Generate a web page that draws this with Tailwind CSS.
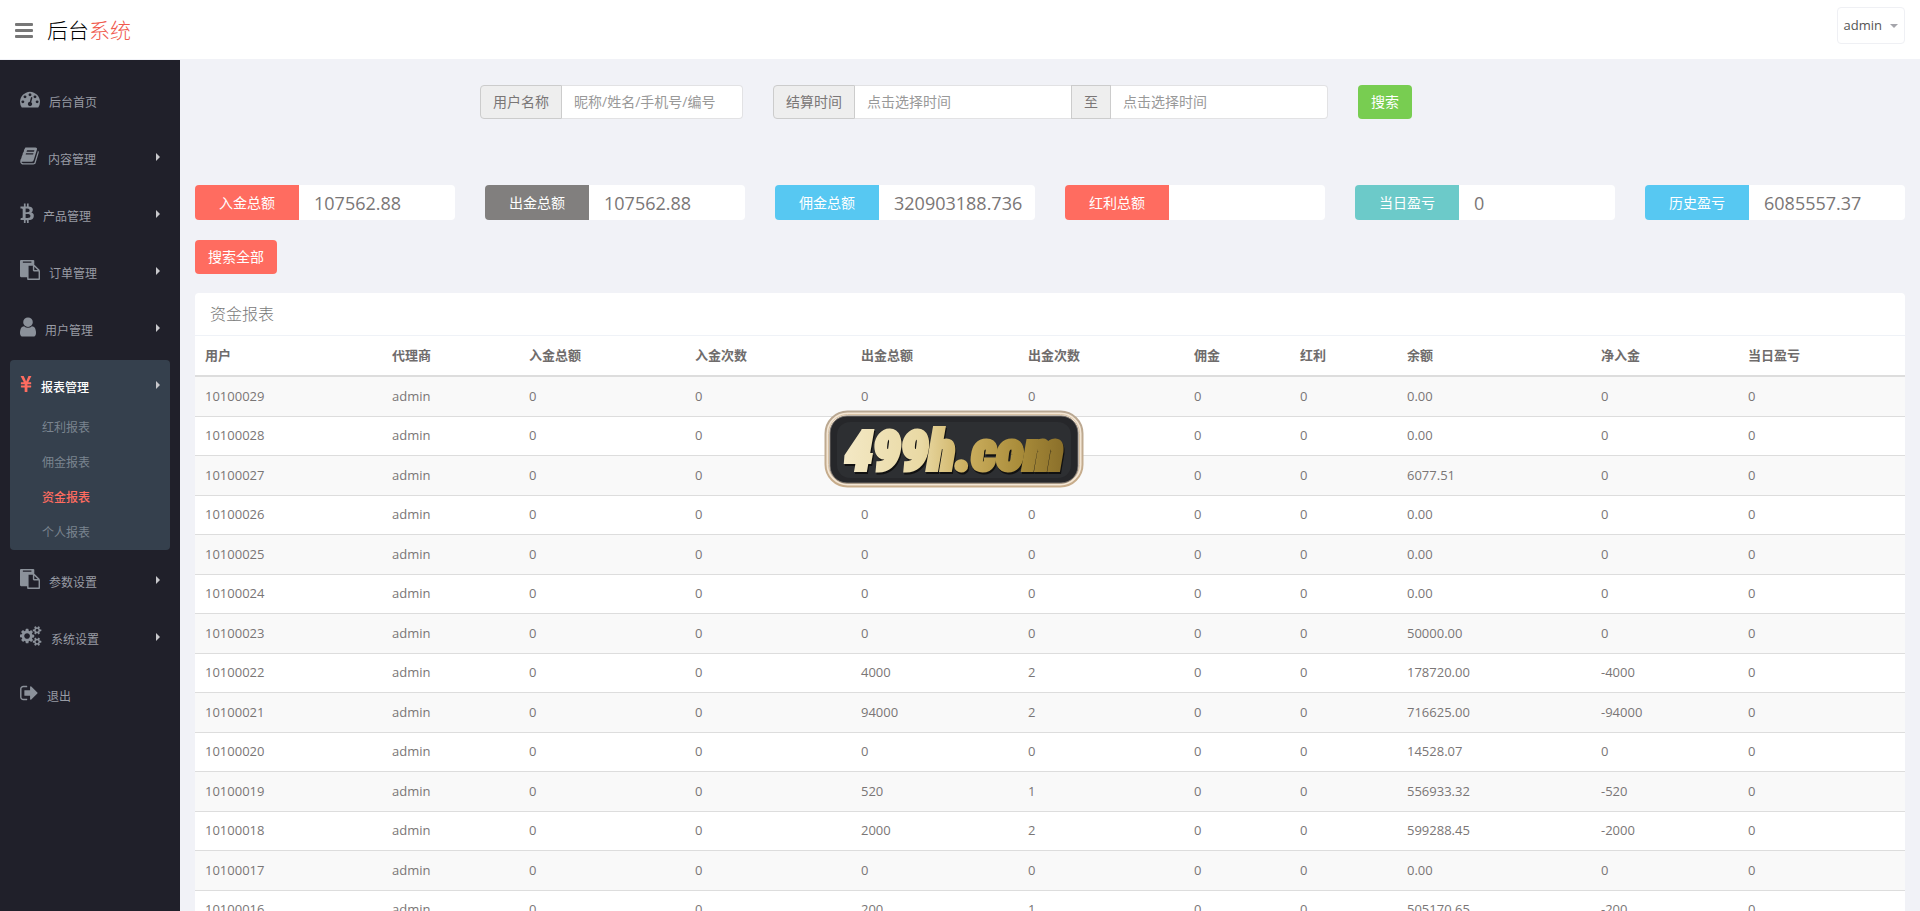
<!DOCTYPE html>
<html lang="zh-CN">
<head>
<meta charset="utf-8">
<title>后台系统</title>
<script src="https://cdn.jsdelivr.net/npm/@tailwindcss/browser@4"></script>
</head>
<body class="flex h-screen flex-col overflow-hidden bg-[#f1f2f7] font-['Open_Sans','Noto_Sans_CJK_SC',sans-serif] text-sm text-[#7a7676]">

<header class="flex h-[60px] shrink-0 items-start justify-between border-b border-[#f1f2f7] bg-white pr-[15px] pl-[15px]">
  <div class="flex h-[60px] items-center gap-[14px]">
    <button type="button" aria-label="切换菜单">
      <svg class="h-4 w-[18px] fill-[#777]" viewBox="0 0 18 16"><rect y="1" width="18" height="3" rx="1"/><rect y="7" width="18" height="3" rx="1"/><rect y="13" width="18" height="3" rx="1"/></svg>
    </button>
    <a href="#" class="text-[21px] leading-[30px] font-light text-black">后台<span class="text-[#f0594d]">系统</span></a>
  </div>
  <button type="button" class="mt-[7px] flex h-[37px] items-center gap-2 rounded border border-[#eff0f4] px-[6px] text-[13px] text-[#555]">admin
    <svg class="h-1 w-2 fill-[#a5a5ab]" viewBox="0 0 8 4"><path d="M0 0h8l-4 4z"/></svg>
  </button>
</header>

<div class="flex min-h-0 flex-1">
  <nav class="w-[180px] shrink-0 bg-[#20202a] px-[10px] pt-[15px] text-xs text-[#989ba4]">
    <ul class="flex flex-col gap-[5px]" id="menu"></ul>
  </nav>

  <main class="min-w-0 flex-1 px-[15px] pt-[25px]">
    <form class="flex gap-[30px] pl-[285px]">
      <div class="flex h-[34px] w-[263px]">
        <label for="user" class="flex w-[82px] shrink-0 items-center justify-center rounded-l border border-[#ccc] bg-[#eee]">用户名称</label>
        <input id="user" type="text" placeholder="昵称/姓名/手机号/编号" class="min-w-0 flex-1 rounded-r border border-l-0 border-[#e2e2e4] bg-white px-3 placeholder:text-[#999]">
      </div>
      <div class="flex h-[34px] w-[555px]">
        <label for="from" class="flex w-[82px] shrink-0 items-center justify-center rounded-l border border-[#ccc] bg-[#eee]">结算时间</label>
        <input id="from" type="text" placeholder="点击选择时间" class="min-w-0 flex-1 border-y border-[#e2e2e4] bg-white px-3 placeholder:text-[#999]">
        <label for="to" class="flex w-10 shrink-0 items-center justify-center border border-[#ccc] bg-[#eee]">至</label>
        <input id="to" type="text" placeholder="点击选择时间" class="min-w-0 flex-1 rounded-r border border-l-0 border-[#e2e2e4] bg-white px-3 placeholder:text-[#999]">
      </div>
      <button type="button" class="h-[34px] w-[54px] rounded bg-[#78cd51] text-white">搜索</button>
    </form>

    <div class="mt-[66px] grid grid-cols-6 gap-[30px]">
      <div class="flex h-[35px]"><label for="s1" class="flex w-2/5 items-center justify-center rounded-l bg-[#ff6c60] text-white">入金总额</label><input id="s1" value="107562.88" readonly class="w-3/5 rounded-r bg-white pl-[15px] text-lg"></div>
      <div class="flex h-[35px]"><label for="s2" class="flex w-2/5 items-center justify-center rounded-l bg-[#817f7e] text-white">出金总额</label><input id="s2" value="107562.88" readonly class="w-3/5 rounded-r bg-white pl-[15px] text-lg"></div>
      <div class="flex h-[35px]"><label for="s3" class="flex w-2/5 items-center justify-center rounded-l bg-[#57c8f2] text-white">佣金总额</label><input id="s3" value="320903188.736" readonly class="w-3/5 rounded-r bg-white pl-[15px] text-lg"></div>
      <div class="flex h-[35px]"><label for="s4" class="flex w-2/5 items-center justify-center rounded-l bg-[#ff6c60] text-white">红利总额</label><input id="s4" value="" readonly class="w-3/5 rounded-r bg-white pl-[15px] text-lg"></div>
      <div class="flex h-[35px]"><label for="s5" class="flex w-2/5 items-center justify-center rounded-l bg-[#6ccac9] text-white">当日盈亏</label><input id="s5" value="0" readonly class="w-3/5 rounded-r bg-white pl-[15px] text-lg"></div>
      <div class="flex h-[35px]"><label for="s6" class="flex w-2/5 items-center justify-center rounded-l bg-[#57c8f2] text-white">历史盈亏</label><input id="s6" value="6085557.37" readonly class="w-3/5 rounded-r bg-white pl-[15px] text-lg"></div>
    </div>

    <button type="button" class="mt-5 block h-[34px] w-[82px] rounded bg-[#ff6c60] text-white">搜索全部</button>

    <section class="mt-[19px] rounded-t bg-white">
      <h2 class="flex h-[43px] items-center border-b border-[#eff2f7] pl-[15px] text-base font-light text-[#797979]">资金报表</h2>
      <table class="w-full table-fixed text-left text-[13px]">
        <colgroup><col class="w-[187px]"><col class="w-[137px]"><col class="w-[166px]"><col class="w-[166px]"><col class="w-[167px]"><col class="w-[166px]"><col class="w-[106px]"><col class="w-[107px]"><col class="w-[194px]"><col class="w-[147px]"><col class="w-[167px]"></colgroup>
        <thead><tr class="h-10 border-b-2 border-[#ddd]" id="head"></tr></thead>
        <tbody id="rows"></tbody>
      </table>
    </section>
  </main>
</div>

<svg class="fixed top-[409px] left-[824px] h-20 w-[260px]" viewBox="0 0 260 80" role="img" aria-label="499h.com">
  <defs>
    <linearGradient id="gold" x1="0" x2="1" y1="0" y2="0"><stop offset="0" stop-color="#f3e8c4"/><stop offset=".35" stop-color="#e9d9a4"/><stop offset=".55" stop-color="#cdb060"/><stop offset=".8" stop-color="#a98c3a"/><stop offset="1" stop-color="#8a6f2a"/></linearGradient>
    <linearGradient id="rim" x1="0" x2="0" y1="0" y2="1"><stop offset="0" stop-color="#b9a893"/><stop offset="1" stop-color="#c8ad8b"/></linearGradient>
  </defs>
  <rect x="1.500" y="2.500" width="257" height="75" rx="22" fill="#f3e6d5" stroke="url(#rim)" stroke-width="2"/>
  <rect x="4.500" y="5.500" width="251" height="69" rx="19" fill="#fdf5ea" stroke="#d9c3a5"/>
  <rect x="6" y="7" width="248" height="67" rx="17" fill="#26272a" stroke="#77706a"/>
  <rect x="13" y="13" width="234" height="56" rx="13" fill="#2d2f32"/>
  <text class="drop-shadow-[1px_2px_0_#111]" x="21" y="61" font-family="'Liberation Sans Narrow','Roboto Condensed','DejaVu Sans Condensed',sans-serif" font-size="56" font-weight="900" font-style="italic" stroke-width="4" stroke-linejoin="miter" fill="url(#gold)" stroke="url(#gold)">499h.com</text>
</svg>

<script>
const icons = {
  dash: '<svg class="h-5 w-5 fill-current" viewBox="0 0 1792 1792"><path d="M384 1152q0-53-37.5-90.5t-90.5-37.5-90.5 37.5-37.5 90.5 37.5 90.5 90.5 37.5 90.5-37.5 37.5-90.5zm192-448q0-53-37.5-90.5t-90.5-37.5-90.5 37.5-37.5 90.5 37.5 90.5 90.5 37.5 90.5-37.5 37.5-90.5zm428 481l101-382q6-26-7.5-48.5t-38.5-29.5-48 6.5-30 39.5l-101 382q-60 5-107 43.5t-63 98.5q-20 77 20 146t117 89 146-20 89-117q16-60-6-117t-72-91zm660-33q0-53-37.5-90.5t-90.5-37.5-90.5 37.5-37.5 90.5 37.5 90.5 90.5 37.5 90.5-37.5 37.5-90.5zm-640-640q0-53-37.5-90.5t-90.5-37.5-90.5 37.5-37.5 90.5 37.5 90.5 90.5 37.5 90.5-37.5 37.5-90.5zm448 192q0-53-37.5-90.5t-90.5-37.5-90.5 37.5-37.5 90.5 37.5 90.5 90.5 37.5 90.5-37.5 37.5-90.5zm320 448q0 261-141 483-19 29-54 29h-1402q-35 0-54-29-141-221-141-483 0-182 71-348t191-286 286-191 348-71 348 71 286 191 191 286 71 348z"/></svg>',
  book: '<svg class="h-5 w-[19px] fill-current" viewBox="60 0 1672 1792"><path d="M1703 478q40 57 18 129l-275 906q-19 64-76.500 107.500t-122.500 43.500h-923q-77 0-148.500-53.500t-99.500-131.500q-24-67-2-127 0-4 3-27t4-37q1-8-3-21.500t-3-19.500q2-11 8-21t16.500-23.500 16.500-23.500q23-38 45-91.500t30-91.500q3-10 .5-30t-.5-28q3-11 17-28t17-23q21-36 42-92t25-90q1-9-2.500-32t.5-28q4-13 22-30.500t22-22.500q19-26 42.500-84.500t27.500-96.500q1-8-3-25.500t-2-26.500q2-8 9-18t18-23 17-21q8-12 16.500-30.500t15-35 16-36 19.500-32 26.500-23.500 36-11.500 47.500 5.500l-1 3q38-9 51-9h761q74 0 114 56t18 130l-274 906q-36 119-71.500 153.500t-128.500 34.500h-869q-27 0-38 15-11 16-1 43 24 70 144 70h923q29 0 56-15.500t35-41.500l300-987q7-22 5-57 38 15 59 43zm-1064 2q-4 13 2 22.500t20 9.500h608q13 0 25.500-9.500t16.500-22.500l21-64q4-13-2-22.500t-20-9.500h-608q-13 0-25.500 9.500t-16.500 22.500zm-83 256q-4 13 2 22.500t20 9.500h608q13 0 25.500-9.500t16.500-22.500l21-64q4-13-2-22.500t-20-9.500h-608q-13 0-25.500 9.500t-16.500 22.500z"/></svg>',
  btc: '<svg class="h-5 w-[14px] fill-current" preserveAspectRatio="none" viewBox="256 60 1260 1700"><path d="M1408 618q18 182-131 258 117 28 175 103t45 214q-7 71-32.500 125t-64.500 89-97 58.500-121.500 34.500-145.500 15v255h-154v-251q-80 0-122-1v252h-154v-255q-18 0-54-.5t-55-.5h-200l31-183h111q50 0 58-51v-402h16q-6-1-16-1v-287q-13-68-89-68h-111v-164l212 1q64 0 97-1v-252h154v247q82-2 122-2v-245h154v252q79 7 140 22.500t113 45 82.500 78 36.500 114.500zm-215 545q0-36-15-64t-37-46-57.500-30.500-65.500-18.500-74-9-69-3-64.500 1-47.500 1v338q8 0 37 .5t48 .5 53-1.500 58.500-4 57-8.500 55.500-14 47.500-21 39.500-30 24.500-40 9.500-51zm-71-476q0-33-12.500-58.500t-30.500-42-48-28-55-16.500-61.500-8-58-2.500-54 1-39.500.5v307q5 0 34.500.5t46.500 0 50-2 55-5.500 51.500-11 48.500-18.500 37-27 27-38.500 9-51z"/></svg>',
  paste: '<svg class="h-5 w-5 fill-current" viewBox="0 0 1792 1792"><path d="M768 1664h896v-640h-416q-40 0-68-28t-28-68v-416h-384v1152zm256-1440v-64q0-13-9.500-22.500t-22.500-9.500h-704q-13 0-22.500 9.500t-9.500 22.500v64q0 13 9.500 22.500t22.500 9.500h704q13 0 22.500-9.500t9.500-22.500zm256 672h299l-299-299v299zm512 128v672q0 40-28 68t-68 28h-960q-40 0-68-28t-28-68v-160h-544q-40 0-68-28t-28-68v-1344q0-40 28-68t68-28h1088q40 0 68 28t28 68v328q21 13 36 28l408 408q28 28 48 76t20 88z"/></svg>',
  user: '<svg class="h-5 w-4 fill-current" viewBox="256 96 1280 1600"><path d="M1536 1399q0 109-62.500 187t-150.500 78h-854q-88 0-150.500-78t-62.500-187q0-85 8.500-160.500t31.500-152 58.500-131 94-89 134.500-34.500q131 128 313 128t313-128q76 0 134.500 34.500t94 89 58.500 131 31.500 152 8.500 160.500zm-256-887q0 159-112.500 271.500t-271.500 112.500-271.500-112.500-112.500-271.500 112.500-271.500 271.500-112.500 271.500 112.500 112.500 271.500z"/></svg>',
  yen: '<svg class="h-4 w-3 fill-[#ff6c60]" preserveAspectRatio="none" viewBox="382 256 1027 1280"><path d="M985 1536h-172q-13 0-22-9t-10-23v-330h-288q-13 0-22-9t-10-23v-103q0-13 10-22t22-10h288v-85h-288q-13 0-22-9t-10-23v-104q0-13 10-22t22-10h214l-321-578q-8-16 0-32 10-16 28-16h194q19 0 29 18l215 425q19 38 56 125 10-24 30-68t28-61l191-420q8-19 29-19h191q17 0 27 16 9 14 1 31l-313 579h215q13 0 22 10t10 22v104q0 14-10 23t-22 9h-290v85h290q13 0 22 10t10 22v103q0 14-10 23t-22 9h-290v330q0 13-10 22t-22 10z"/></svg>',
  cogs: '<svg class="h-5 w-[22px] fill-current" viewBox="0 0 1856 1792"><path d="M832 896q0-106-75-181t-181-75-181 75-75 181 75 181 181 75 181-75 75-181zm768 512q0-52-38-90t-90-38-90 38-38 90q0 53 37.500 90.500t90.500 37.500 90.500-37.500 37.500-90.500zm0-1024q0-52-38-90t-90-38-90 38-38 90q0 53 37.500 90.500t90.500 37.500 90.500-37.500 37.500-90.500zm-384 421v185q0 10-7 19.500t-16 10.500l-155 24q-11 35-32 76 34 48 90 115 7 11 7 20 0 12-7 19-23 30-82.500 89.500t-78.500 59.500q-11 0-21-7l-115-90q-37 19-77 31-11 108-23 155-7 24-30 24h-186q-11 0-20-7.500t-10-17.500l-23-153q-34-10-75-31l-118 89q-7 7-20 7-11 0-21-8-144-133-144-160 0-9 7-19 10-14 41-53t47-61q-23-44-35-82l-152-24q-10-1-17-9.500t-7-19.500v-185q0-10 7-19.500t16-10.500l155-24q11-35 32-76-34-48-90-115-7-11-7-20 0-12 7-20 22-30 82-89t79-59q11 0 21 7l115 90q34-18 77-32 11-108 23-154 7-24 30-24h186q11 0 20 7.500t10 17.500l23 153q34 10 75 31l118-89q8-7 20-7 11 0 21 8 144 133 144 160 0 8-7 19-12 16-42 54t-45 60q23 48 34 82l152 23q10 2 17 10.500t7 19.500zm640 533v140q0 16-149 31-12 27-30 52 51 113 51 138 0 4-4 7-122 71-124 71-8 0-46-47t-52-68q-20 2-30 2t-30-2q-14 21-52 68t-46 47q-2 0-124-71-4-3-4-7 0-25 51-138-18-25-30-52-149-15-149-31v-140q0-16 149-31 13-29 30-52-51-113-51-138 0-4 4-7 4-2 35-20t59-34 30-16q8 0 46 46.500t52 67.500q20-2 30-2t30 2q51-71 92-112l6-2q4 0 124 70 4 3 4 7 0 25-51 138 17 23 30 52 149 15 149 31zm0-1024v140q0 16-149 31-12 27-30 52 51 113 51 138 0 4-4 7-122 71-124 71-8 0-46-47t-52-68q-20 2-30 2t-30-2q-14 21-52 68t-46 47q-2 0-124-71-4-3-4-7 0-25 51-138-18-25-30-52-149-15-149-31v-140q0-16 149-31 13-29 30-52-51-113-51-138 0-4 4-7 4-2 35-20t59-34 30-16q8 0 46 46.500t52 67.500q20-2 30-2t30 2q51-71 92-112l6-2q4 0 124 70 4 3 4 7 0 25-51 138 17 23 30 52 149 15 149 31z"/></svg>',
  out: '<svg class="h-5 w-[18px] fill-current" viewBox="64 0 1600 1792"><path d="M704 1440q0 4 1 20t.5 26.500-3 23.500-10 19.500-20.500 6.500h-320q-119 0-203.500-84.500t-84.500-203.500v-704q0-119 84.500-203.500t203.500-84.500h320q13 0 22.500 9.500t9.500 22.500q0 4 1 20t.5 26.500-3 23.500-10 19.500-20.500 6.500h-320q-66 0-113 47t-47 113v704q0 66 47 113t113 47h312l11.500 1 11.500 3 8 5.500 7 9 2 13.500zm928-544q0 26-19 45l-544 544q-19 19-45 19t-45-19-19-45v-288h-448q-26 0-45-19t-19-45v-384q0-26 19-45t45-19h448v-288q0-26 19-45t45-19 45 19l544 544q19 19 19 45z"/></svg>'
};
const menu = [['dash','后台首页'],['book','内容管理',1],['btc','产品管理',1],['paste','订单管理',1],['user','用户管理',1],['yen','报表管理',1,['红利报表','佣金报表','资金报表','个人报表']],['paste','参数设置',1],['cogs','系统设置',1],['out','退出']];
document.getElementById('menu').innerHTML = menu.map(([icon, name, arrow, sub]) => `
<li class="${sub ? 'rounded bg-[#35404d]' : ''}">
  <a href="#" class="flex h-[52px] items-center gap-[9px] px-[10px] ${sub ? 'font-medium text-white' : ''}">
    <span class="pb-1 text-[#8b919a]">${icons[icon]}</span><span class="pt-1">${name}</span>
    ${arrow ? '<svg class="mr-0 mb-[2px] ml-auto h-2 w-1 fill-[#c8c8cc]" viewBox="0 0 4 8"><path d="M0 0l4 4-4 4z"/></svg>' : ''}
  </a>
  ${sub ? `<ul class="flex flex-col gap-[5px] pb-[3px] text-[#7a848f]">${sub.map(s => `<li><a href="#" class="flex h-[30px] items-center pt-[2px] pl-8 ${s === '资金报表' ? 'font-medium text-[#ff6c60]' : ''}">${s}</a></li>`).join('')}</ul>` : ''}
</li>`).join('');

document.getElementById('head').innerHTML = ['用户','代理商','入金总额','入金次数','出金总额','出金次数','佣金','红利','余额','净入金','当日盈亏']
  .map(h => `<th scope="col" class="pl-[10px] font-bold text-[#6f6c6c]">${h}</th>`).join('');

const data = [[29,0,0,'0.00',0],[28,0,0,'0.00',0],[27,0,0,'6077.51',0],[26,0,0,'0.00',0],[25,0,0,'0.00',0],[24,0,0,'0.00',0],[23,0,0,'50000.00',0],[22,4000,2,'178720.00',-4000],[21,94000,2,'716625.00',-94000],[20,0,0,'14528.07',0],[19,520,1,'556933.32',-520],[18,2000,2,'599288.45',-2000],[17,0,0,'0.00',0],[16,200,1,'505170.65',-200]];
document.getElementById('rows').innerHTML = data.map(([id, out, n, bal, net]) =>
  `<tr class="h-10 border-b border-[#ddd] odd:bg-[#f9f9f9] even:h-[39px]">${['101000' + id,'admin',0,0,out,n,0,0,bal,net,0].map(v => `<td class="pl-[10px]">${v}</td>`).join('')}</tr>`).join('');
</script>
</body>
</html>
